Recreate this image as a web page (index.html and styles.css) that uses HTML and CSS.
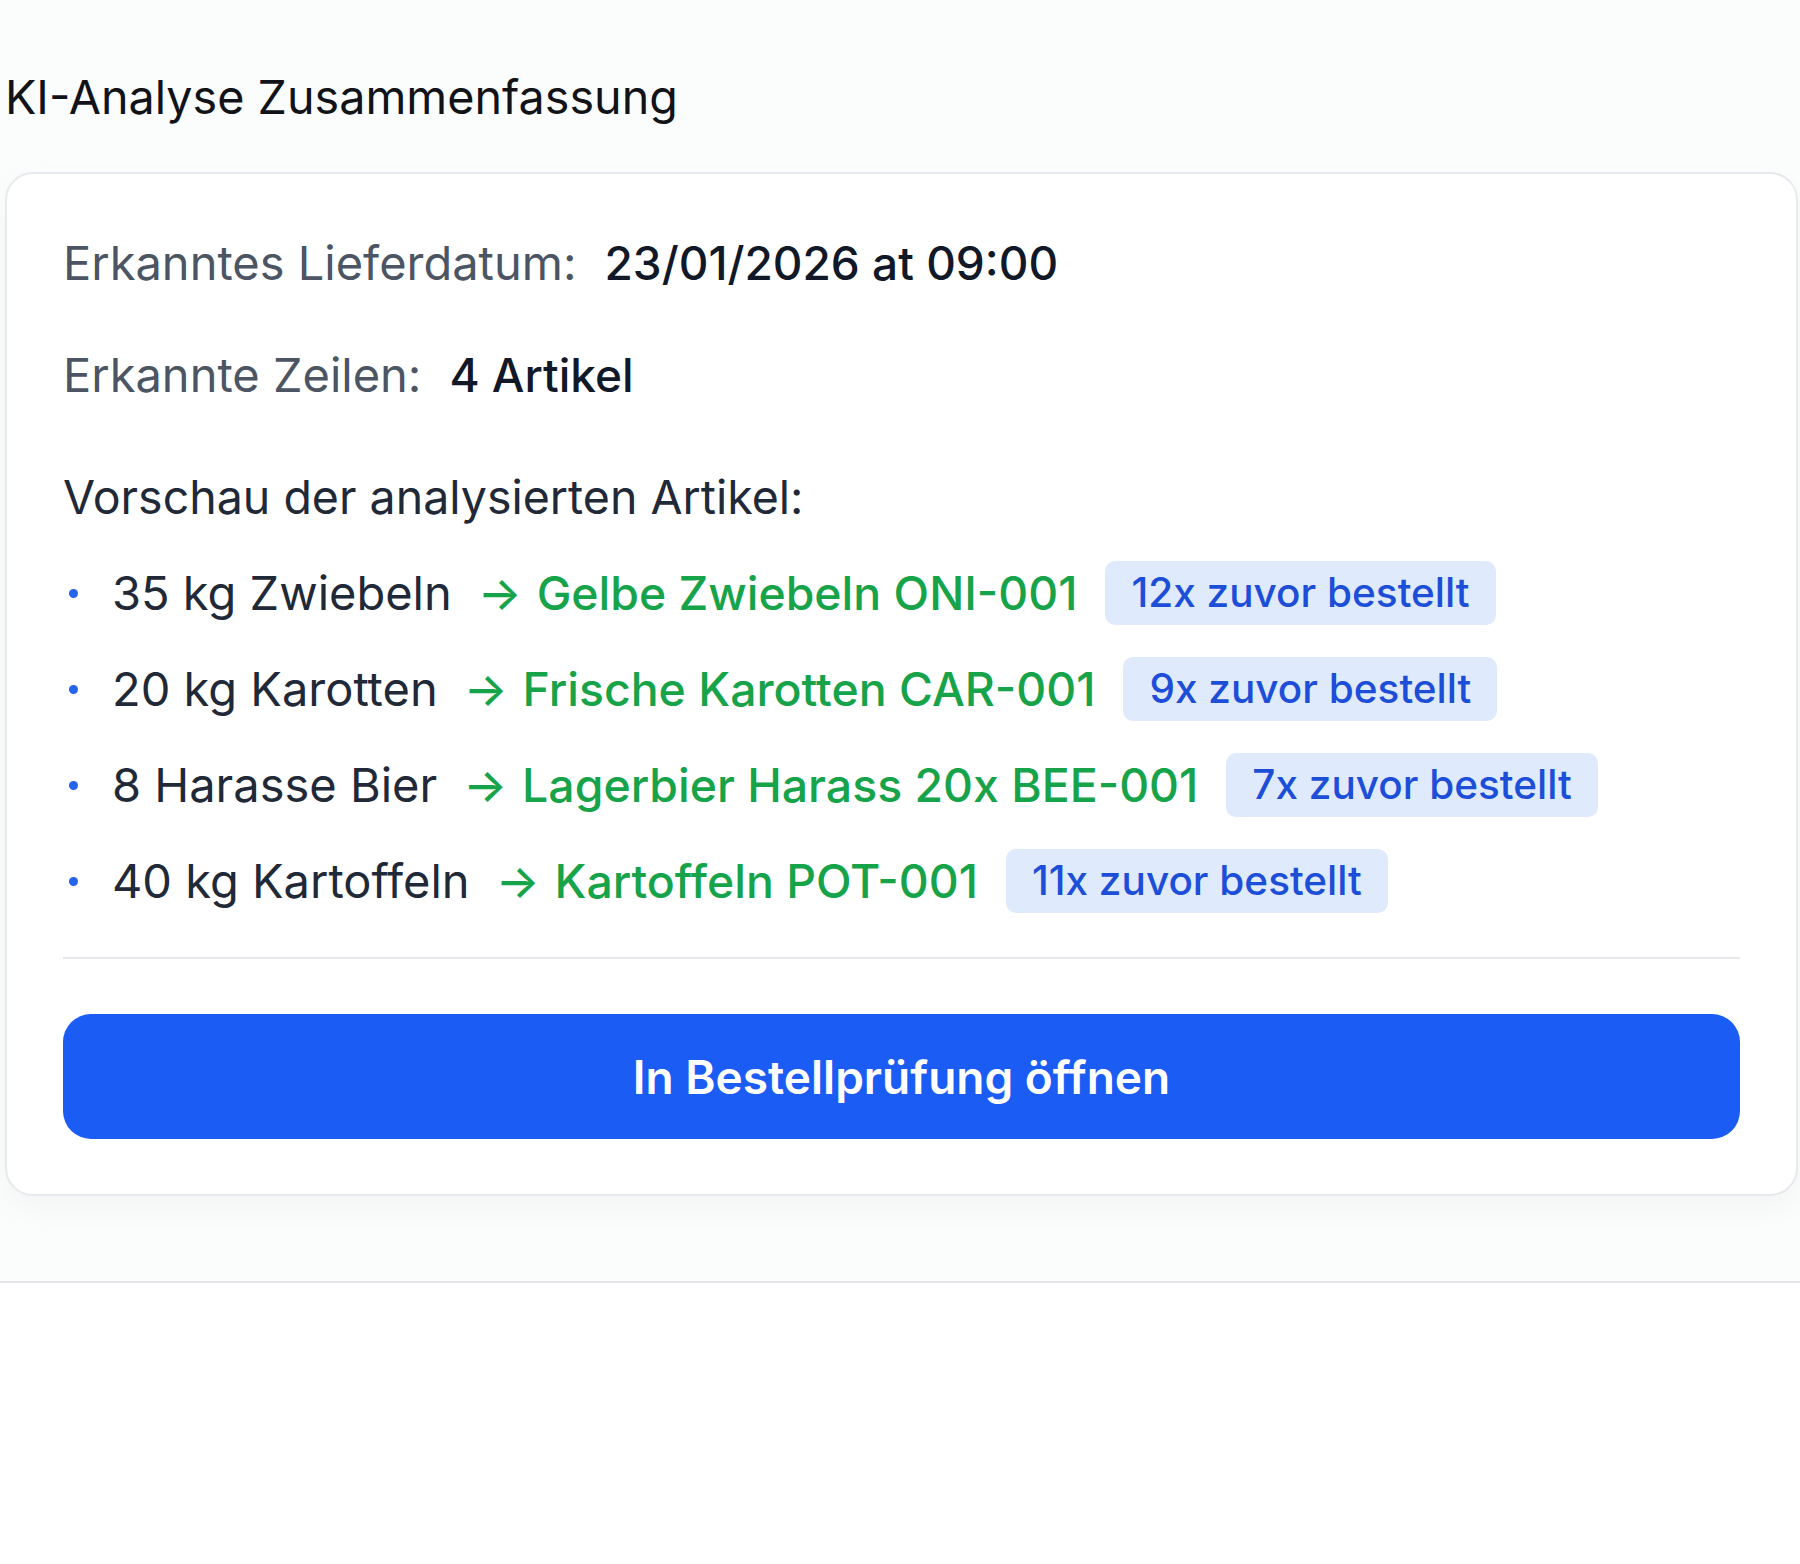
FILE: index.html
```html
<!DOCTYPE html>
<html lang="de">
<head>
<meta charset="utf-8">
<title>KI-Analyse Zusammenfassung</title>
<link rel="stylesheet" href="styles.css">
</head>
<body>
<div class="page">
  <section class="panel">
    <h2 class="title">KI-Analyse Zusammenfassung</h2>
    <div class="card">
      <div class="row row-date"><span class="label">Erkanntes Lieferdatum:</span><span class="value">23/01/2026 at 09:00</span></div>
      <div class="row row-lines"><span class="label">Erkannte Zeilen:</span><span class="value">4 Artikel</span></div>
      <p class="preview-heading">Vorschau der analysierten Artikel:</p>
      <ul class="items">
        <li class="item"><span class="bullet"></span><span class="src">35 kg Zwiebeln</span><span class="arrow">→</span><span class="match">Gelbe Zwiebeln ONI-001</span><span class="badge">12x zuvor bestellt</span></li>
        <li class="item"><span class="bullet"></span><span class="src">20 kg Karotten</span><span class="arrow">→</span><span class="match">Frische Karotten CAR-001</span><span class="badge">9x zuvor bestellt</span></li>
        <li class="item"><span class="bullet"></span><span class="src">8 Harasse Bier</span><span class="arrow">→</span><span class="match">Lagerbier Harass 20x BEE-001</span><span class="badge">7x zuvor bestellt</span></li>
        <li class="item"><span class="bullet"></span><span class="src">40 kg Kartoffeln</span><span class="arrow">→</span><span class="match">Kartoffeln POT-001</span><span class="badge">11x zuvor bestellt</span></li>
      </ul>
      <hr class="divider">
      <button class="cta" type="button">In Bestellprüfung öffnen</button>
    </div>
  </section>
</div>
</body>
</html>
```

FILE: styles.css
```css
* { box-sizing: border-box; }
html, body { margin: 0; padding: 0; background: #ffffff; }
body {
  font-family: Inter, "Noto Sans", "Liberation Sans", sans-serif;
  color: #111827;
  width: 1800px;
  height: 1564px;
  overflow: hidden;
}
.panel {
  background: #fbfcfc;
  padding: 68px 2px 85px 5px;
  border-bottom: 2px solid #e3e4e7;
}
.title {
  margin: 0 0 46px 0;
  font-size: 46.7px;
  line-height: 58px;
  font-weight: 400;
  color: #111318;
  letter-spacing: 0;
}
.card {
  background: #ffffff;
  border: 2px solid #e7e9ee;
  border-radius: 28px;
  padding: 57px 56px 55px 56px;
  box-shadow: 0 12px 30px rgba(15, 23, 42, 0.035);
}
.row {
  display: flex;
  align-items: baseline;
  gap: 28px;
  font-size: 47px;
  line-height: 64px;
}
.row-lines { margin-top: 48px; }
.label { color: #4b5563; font-weight: 400; }
.value { color: #111827; font-weight: 500; font-size: 46px; }
.preview-heading {
  margin: 58px 0 0 0;
  font-size: 46.5px;
  line-height: 64px;
  font-weight: 400;
  color: #1f2937;
}
.items {
  list-style: none;
  margin: 32px 0 0 0;
  padding: 0;
  display: flex;
  flex-direction: column;
  gap: 32px;
}
.item {
  display: flex;
  align-items: center;
  height: 64px;
  font-size: 47px;
  line-height: 64px;
}
.bullet {
  width: 9px;
  height: 9px;
  border-radius: 50%;
  background: #2563eb;
  margin-left: 6px;
  margin-right: 34px;
  flex: none;
}
.src { color: #1f2937; font-weight: 400; }
.arrow { color: #16a34a; margin-left: 26px; margin-right: 15px; font-weight: 500; font-size: 46px; }
.match { color: #16a34a; font-weight: 500; font-size: 46.4px; }
.badge {
  margin-left: 28px;
  height: 64px;
  line-height: 64px;
  padding: 0 26px;
  border-radius: 10px;
  background: #dfeafd;
  color: #1d4ed8;
  font-size: 40.5px;
  font-weight: 500;
}
.divider {
  margin: 44px 0 0 0;
  border: 0;
  height: 2px;
  background: #e5e7eb;
}
.cta {
  display: flex;
  align-items: center;
  justify-content: center;
  width: 100%;
  height: 125px;
  margin-top: 55px;
  border: 0;
  border-radius: 28px;
  background: #1b5cf5;
  color: #ffffff;
  font-family: inherit;
  font-size: 46px;
  font-weight: 600;
  cursor: pointer;
}
```
